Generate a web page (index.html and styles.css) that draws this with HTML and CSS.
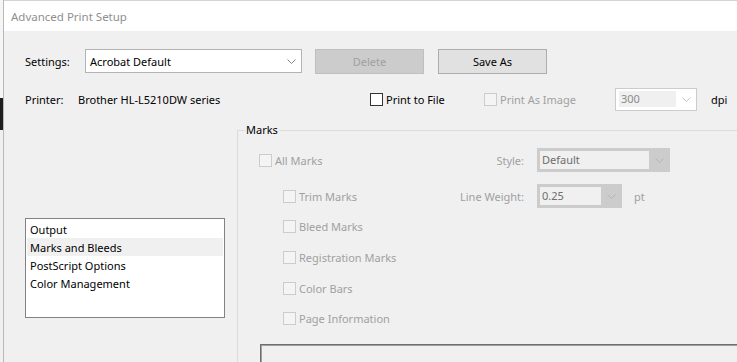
FILE: index.html
```html
<!DOCTYPE html>
<html lang="en">
<head>
  <meta charset="UTF-8" />
  <title>Advanced Print Setup</title>
  <link rel="stylesheet" href="styles.css">
</head>
<body>
  <div class="edge"></div>
  <div class="window">
    <div class="titlebar">Advanced Print Setup</div>

    <div class="content">
      <div class="row settings-row">
        <span class="label settings-label">Settings:</span>
        <div class="combo combo-main">
          <span class="combo-text">Acrobat Default</span>
          <span class="combo-arrow">
            <svg width="9" height="5" viewBox="0 0 9 5"><polyline points="0.5,0.5 4.5,4.5 8.5,0.5" fill="none" stroke="#888" stroke-width="1"/></svg>
          </span>
        </div>
        <button class="btn btn-disabled" disabled>Delete</button>
        <button class="btn">Save As</button>
      </div>

      <div class="row printer-row">
        <span class="label printer-label">Printer:</span>
        <span class="printer-name">Brother HL-L5210DW series</span>
        <label class="check check-file"><span class="box"></span>Print to File</label>
        <label class="check check-image off"><span class="box"></span>Print As Image</label>
        <div class="combo combo-dpi off">
          <span class="combo-text">300</span>
          <span class="combo-arrow">
            <svg width="9" height="5" viewBox="0 0 9 5"><polyline points="0.5,0.5 4.5,4.5 8.5,0.5" fill="none" stroke="#c4c4c4" stroke-width="1"/></svg>
          </span>
        </div>
        <span class="unit">dpi</span>
      </div>

      <div class="main">
        <div class="side">
          <ul class="listbox">
            <li>Output</li>
            <li class="selected">Marks and Bleeds</li>
            <li>PostScript Options</li>
            <li>Color Management</li>
          </ul>
        </div>

        <fieldset class="marks">
          <legend>Marks</legend>
          <div class="marks-grid">
            <label class="check off"><span class="box"></span>All Marks</label>
            <span class="field-label">Style:</span>
            <div class="field">
              <div class="combo combo-style off">
                <span class="combo-text">Default</span>
                <span class="combo-arrow">
                  <svg width="9" height="5" viewBox="0 0 9 5"><polyline points="0.5,0.5 4.5,4.5 8.5,0.5" fill="none" stroke="#b4b4b4" stroke-width="1"/></svg>
                </span>
              </div>
            </div>

            <label class="check off indent"><span class="box"></span>Trim Marks</label>
            <span class="field-label">Line Weight:</span>
            <div class="field">
              <div class="combo combo-weight off">
                <span class="combo-text">0.25</span>
                <span class="combo-arrow">
                  <svg width="9" height="5" viewBox="0 0 9 5"><polyline points="0.5,0.5 4.5,4.5 8.5,0.5" fill="none" stroke="#b4b4b4" stroke-width="1"/></svg>
                </span>
              </div>
              <span class="unit off-text">pt</span>
            </div>
          </div>

          <div class="mark-list">
            <label class="check off indent"><span class="box"></span>Bleed Marks</label>
            <label class="check off indent"><span class="box"></span>Registration Marks</label>
            <label class="check off indent"><span class="box"></span>Color Bars</label>
            <label class="check off indent"><span class="box"></span>Page Information</label>
          </div>

          <div class="preview"></div>
        </fieldset>
      </div>
    </div>
  </div>
</body>
</html>
```

FILE: styles.css
```css
html, body {
  margin: 0;
  height: 100%;
  overflow: hidden;
}
body {
  display: flex;
  background: #f0f0f0;
  font-family: 'Noto Sans', sans-serif;
  font-size: 11px;
  color: #000;
}
.edge {
  width: 3px;
  flex: none;
  background: linear-gradient(to bottom, #f5f5f5 0, #f5f5f5 98px, #1e1e1e 98px, #1e1e1e 130px, #f0f0f0 130px);
}
.window {
  flex: 1;
  border-left: 1px solid #b9b9b9;
  background: #f0f0f0;
  min-width: 0;
}
.titlebar {
  height: 31px;
  line-height: 31px;
  background: #fff;
  color: #8f8f8f;
  font-size: 11.5px;
  padding-left: 7px;
  border-top: 1px solid #d4d4d4;
  box-sizing: border-box;
}
.content {
  padding: 18px 0 0 21px;
}
.row {
  display: flex;
  align-items: center;
}
.settings-row {
  height: 24px;
}
.settings-label {
  width: 60px;
}
.combo {
  display: flex;
  align-items: center;
  box-sizing: border-box;
  border: 1px solid #b3b3b3;
  background: #fff;
}
.combo-text {
  flex: 1;
  padding-left: 4px;
  white-space: nowrap;
}
.combo-arrow {
  width: 20px;
  display: flex;
  justify-content: center;
  align-items: center;
}
.combo-main {
  width: 217px;
  height: 24px;
}
.btn {
  font-family: inherit;
  font-size: 11px;
  box-sizing: border-box;
  height: 25px;
  width: 109px;
  margin-left: 13px;
  background: #e1e1e1;
  border: 1px solid #adadad;
  color: #000;
  padding: 0;
}
.btn + .btn {
  margin-left: 14px;
}
.btn-disabled {
  background: #cccccc;
  border-color: #bfbfbf;
  color: #a0a0a0;
}
.printer-row {
  margin-top: 15px;
  height: 22px;
}
.printer-label {
  width: 53px;
}
.printer-name {
  width: 292px;
}
.check {
  display: flex;
  align-items: center;
  gap: 3px;
  white-space: nowrap;
}
.box {
  width: 13px;
  height: 13px;
  box-sizing: border-box;
  border: 1px solid #333;
  background: #fff;
  flex: none;
}
.check.off {
  color: #a0a0a0;
}
.check.off .box {
  border-color: #cccccc;
  background: #f4f4f4;
}
.check-file {
  width: 114px;
}
.check-image {
  width: 131px;
}
.combo-dpi {
  width: 82px;
  height: 23px;
  border-color: #cccccc;
  padding: 3px 0 3px 3px;
}
.combo-dpi .combo-text {
  background: #f0f0f0;
  color: #8a8a8a;
  height: 16px;
  line-height: 16px;
  padding-left: 2px;
}
.unit {
  margin-left: 14px;
}
.main {
  display: flex;
  align-items: flex-start;
  margin-top: 12px;
}
.side {
  width: 212px;
  flex: none;
}
.listbox {
  list-style: none;
  margin: 96px 0 0 0;
  padding: 1px;
  width: 200px;
  height: 100px;
  box-sizing: border-box;
  border: 1px solid #828282;
  background: #fff;
}
.listbox li {
  height: 18px;
  line-height: 19px;
  padding-left: 3px;
}
.listbox li.selected {
  background: #f0f0f0;
}
.marks {
  margin: 0;
  padding: 0 0 0 21px;
  width: 520px;
  height: 300px;
  border: 1px solid #dcdcdc;
  flex: none;
}
.marks legend {
  padding: 0 1px;
  margin-left: -14px;
  line-height: 16px;
}
.marks-grid {
  display: grid;
  grid-template-columns: 187px 78px auto;
  grid-template-rows: 24px 24px;
  row-gap: 12px;
  align-items: center;
  margin-top: 10px;
}
.indent {
  margin-left: 24px;
}
.field-label {
  text-align: right;
  color: #a0a0a0;
}
.field {
  display: flex;
  align-items: center;
  margin-left: 13px;
}
.combo.off {
  border-color: #cccccc;
}
.combo-style, .combo-weight {
  height: 24px;
  background: #cccccc;
  padding: 2px 0 2px 2px;
}
.combo-style {
  width: 133px;
}
.combo-weight {
  width: 85px;
}
.combo-style .combo-text, .combo-weight .combo-text {
  background: #f0f0f0;
  color: #6d6d6d;
  height: 18px;
  line-height: 18px;
  padding-left: 2px;
}
.off-text {
  color: #a0a0a0;
}
.field .unit {
  margin-left: 12px;
}
.mark-list {
  display: flex;
  flex-direction: column;
  gap: 6.75px;
  margin-top: 6.5px;
}
.mark-list .check {
  height: 24px;
}
.preview {
  margin: 13px 0 0 1px;
  height: 60px;
  border-top: 1px solid #6e6e6e;
  border-left: 1px solid #6e6e6e;
  box-shadow: inset 1px 1px 0 #a0a0a0;
  background: #f0f0f0;
}
```
